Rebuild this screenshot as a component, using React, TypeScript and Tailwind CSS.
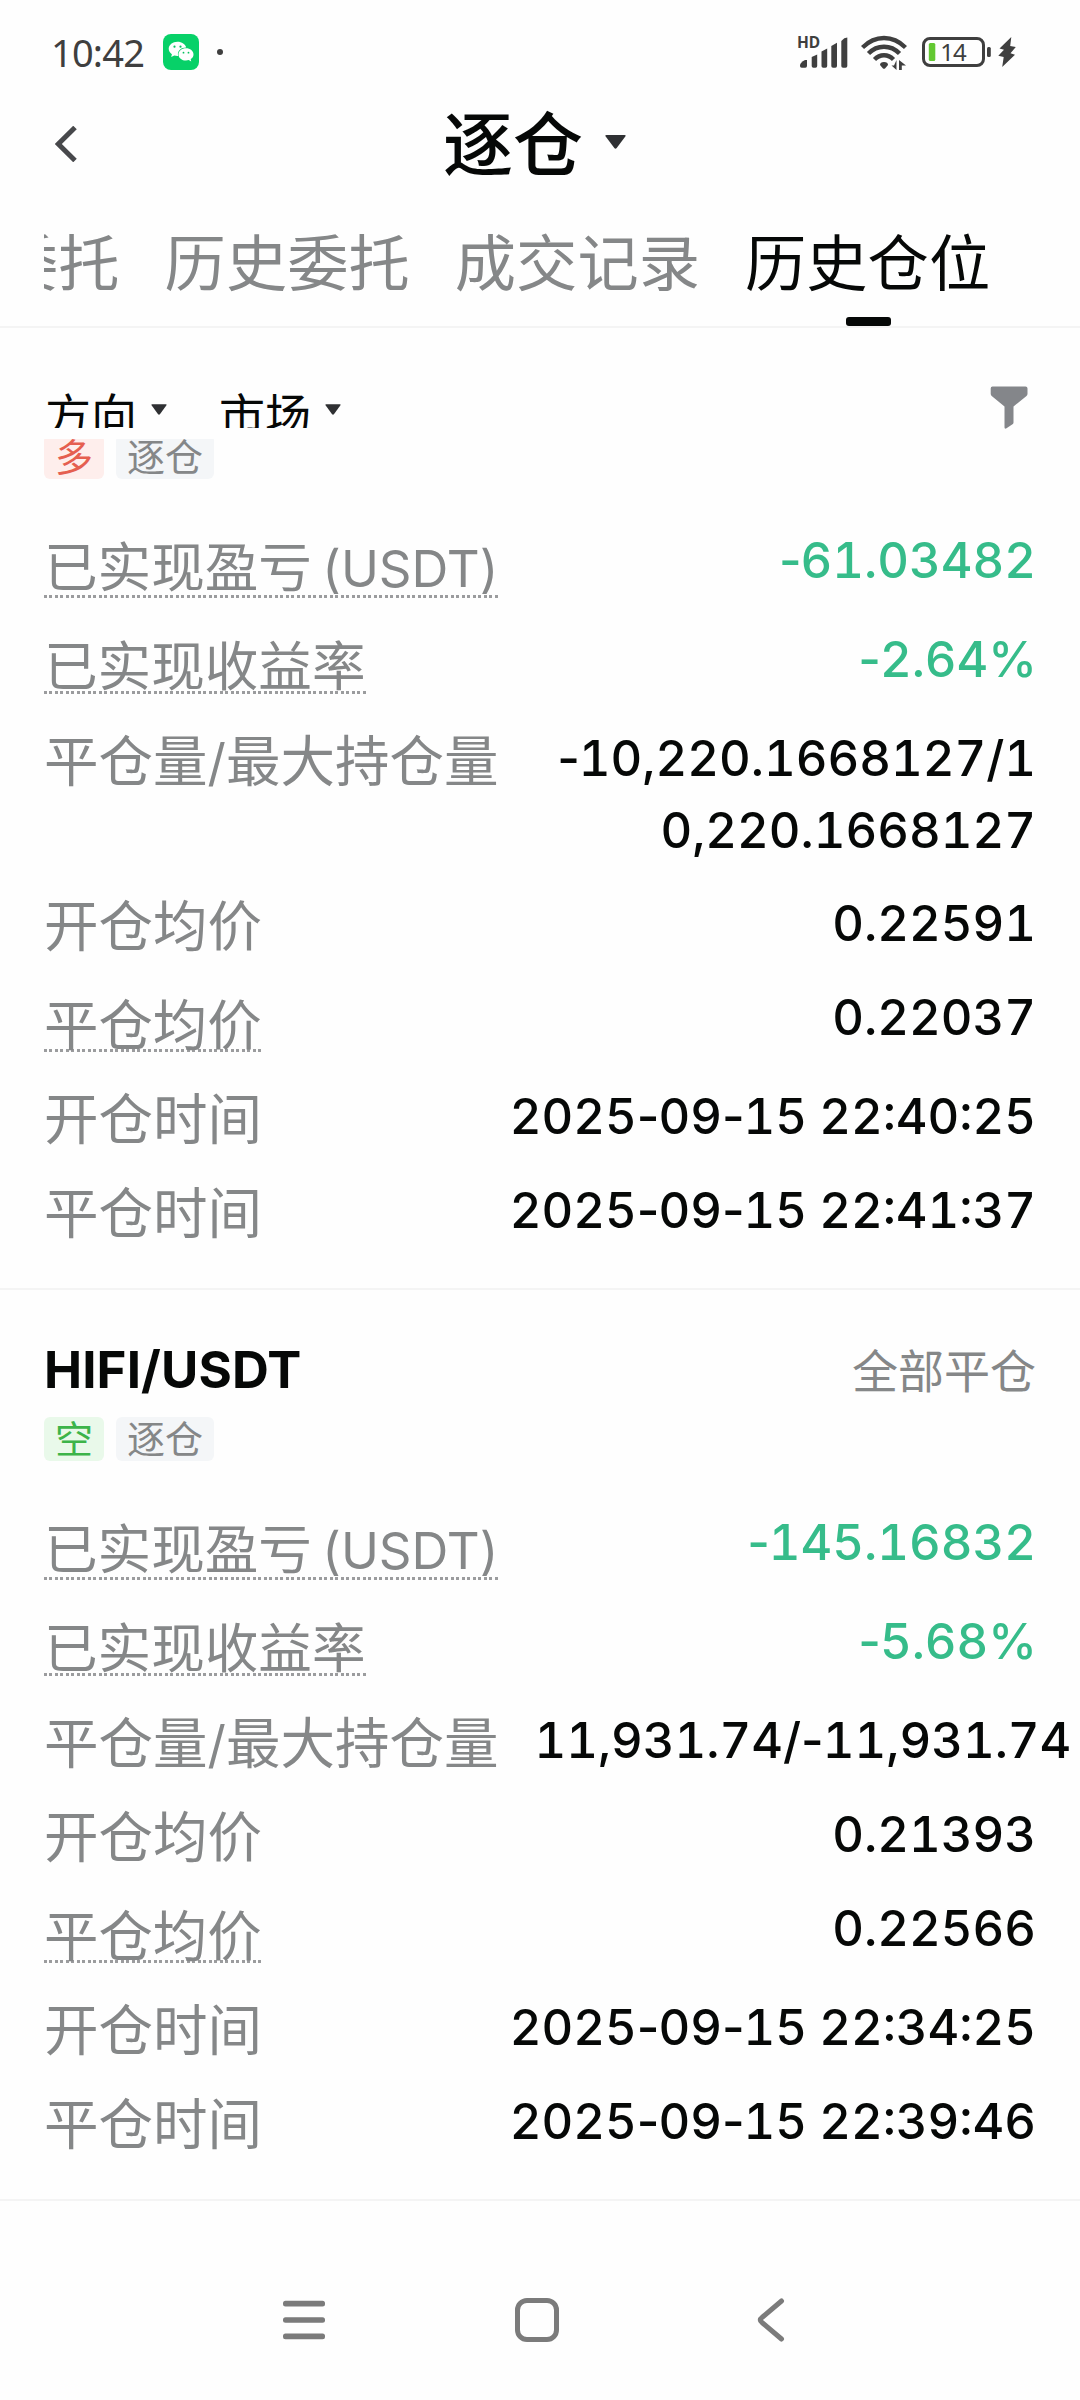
type Row = {
  label: string;
  value: string;
  underline?: boolean;
  tone?: "green";
  wrap?: boolean;
};

type Position = {
  pair?: string;
  status?: string;
  side: "long" | "short";
  rows: Row[];
};

const positions: Position[] = [
  {
    side: "long",
    rows: [
      { label: "已实现盈亏 (USDT)", value: "-61.03482", underline: true, tone: "green" },
      { label: "已实现收益率", value: "-2.64%", underline: true, tone: "green" },
      { label: "平仓量/最大持仓量", value: "-10,220.1668127/10,220.1668127", wrap: true },
      { label: "开仓均价", value: "0.22591" },
      { label: "平仓均价", value: "0.22037", underline: true },
      { label: "开仓时间", value: "2025-09-15 22:40:25" },
      { label: "平仓时间", value: "2025-09-15 22:41:37" },
    ],
  },
  {
    pair: "HIFI/USDT",
    status: "全部平仓",
    side: "short",
    rows: [
      { label: "已实现盈亏 (USDT)", value: "-145.16832", underline: true, tone: "green" },
      { label: "已实现收益率", value: "-5.68%", underline: true, tone: "green" },
      { label: "平仓量/最大持仓量", value: "11,931.74/-11,931.74" },
      { label: "开仓均价", value: "0.21393" },
      { label: "平仓均价", value: "0.22566", underline: true },
      { label: "开仓时间", value: "2025-09-15 22:34:25" },
      { label: "平仓时间", value: "2025-09-15 22:39:46" },
    ],
  },
];

function StatusBar() {
  return (
    <div className="flex h-[104px] items-center pl-[51px] text-[#3f3f3f]">
      <span className="w-24 font-['Noto_Sans',sans-serif] text-[38px] leading-none tracking-[-0.8px]">10:42</span>
      <svg className="ml-4 h-9 w-9" viewBox="0 0 36 36">
        <rect width="36" height="36" rx="8" fill="#07d168" />
        <path
          fill="#fff"
          d="M14.5 7.7c-4.9 0-8.8 3.2-8.8 7.1 0 2.2 1.2 4.1 3.2 5.4l-.7 2.8 3.1-1.6c1 .3 2.1.5 3.2.5h.7c-.2-.6-.3-1.2-.3-1.8 0-3.7 3.5-6.6 7.9-6.6h.4c-.8-3.3-4.4-5.8-8.7-5.8z"
        />
        <path
          fill="#fff"
          d="M23 14.3c-4.2 0-7.5 2.7-7.5 6.1s3.3 6.1 7.5 6.1c1 0 1.9-.1 2.7-.4l2.5 1.5-.5-2.5c1.7-1.1 2.8-2.8 2.8-4.7 0-3.4-3.3-6.1-7.5-6.1z"
        />
        <circle cx="11.5" cy="12.7" r="1.1" fill="#07c160" />
        <circle cx="17.5" cy="12.7" r="1.1" fill="#07c160" />
        <circle cx="20.5" cy="18.7" r="0.9" fill="#07c160" />
        <circle cx="25.5" cy="18.7" r="0.9" fill="#07c160" />
      </svg>
      <span className="ml-[18px] h-1.5 w-1.5 rounded-full bg-[#3f3f3f]" />

      <svg className="ml-[574px] h-9 w-[51px]" viewBox="797 34 51 36" fill="currentColor">
        <text x="797" y="48" fontSize="15.5" fontWeight="700" fontFamily="Noto Sans, sans-serif">
          HD
        </text>
        <path d="M800 65.5q0-3 5-5.5h2v6q0 1.7-1.7 1.7h-3.6q-1.7 0-1.7-1.7z" />
        <path d="M811.7 57l5.5-2.5V66q0 1.7-1.7 1.7h-2.1q-1.7 0-1.7-1.7z" />
        <path d="M821.5 51.5l5.7-3V66q0 1.7-1.7 1.7h-2.3q-1.7 0-1.7-1.7z" />
        <path d="M831.3 46l5.7-3.2V66q0 1.7-1.7 1.7H833q-1.7 0-1.7-1.7z" />
        <path d="M841.3 41q3-3.4 6-3.4V66q0 1.7-1.7 1.7H843q-1.7 0-1.7-1.7z" />
      </svg>

      <svg className="ml-[13px] h-9 w-[46px]" viewBox="861 34 46 36" fill="none">
        <g stroke="currentColor" strokeWidth="4.4">
          <path d="M862.5 47.5Q872 38 884 38t21.5 9.5" />
          <path d="M868.5 53.5Q875 46.7 884 46.7t15.5 6.8" />
          <path d="M874.5 59.5Q878.5 55.3 884 55.3t9.5 4.2" />
        </g>
        <path d="M880 65q0-3 4-3t4 3l-3 3.5q-1 .7-2 0z" fill="currentColor" />
        <path d="M896.5 60v10l-5-4.5h2.5zM899 70V60l7 5.5h-4.2V70z" fill="currentColor" />
      </svg>

      <svg className="ml-[15px] h-9 w-[69px]" viewBox="922 34 69 36">
        <rect x="923.5" y="38.5" width="60" height="27" rx="6.5" fill="none" stroke="currentColor" strokeWidth="3" />
        <rect x="987" y="47" width="3.8" height="10" rx="1.5" fill="currentColor" />
        <rect x="928.8" y="43" width="6.5" height="18" rx="1.5" fill="#63c832" />
        <text x="940.2" y="61" fontSize="24" fill="currentColor" letterSpacing="-0.8" fontFamily="Noto Sans, sans-serif">
          14
        </text>
      </svg>

      <svg className="ml-[7px] h-9 w-[18px]" viewBox="998 34 18 36" fill="currentColor">
        <path d="M1011.3 37L999.5 48.5l4.5 1.3-5.7 6 5.4 1.2-1.5 10L1015 54.8l-4.5-1.5 5.3-6.3-5.6-1z" />
      </svg>
    </div>
  );
}

function Caret({ className }: { className: string }) {
  return (
    <svg className={className} viewBox="0 0 21 14" fill="#2f3033">
      <path d="M1.5 0h18q1.8 0 .8 1.5l-8.6 11.6q-1.2 1.3-2.4 0L.7 1.5Q-.3 0 1.5 0z" />
    </svg>
  );
}

function Header() {
  return (
    <header className="flex h-20 items-center pl-[55px]">
      <svg className="h-9 w-[22px]" viewBox="0 0 22 36" fill="none" stroke="#47484b" strokeWidth="5">
        <path d="M20 1.5L3.3 18 20 34.5" />
      </svg>
      <h1 className="ml-[366px] pt-1 text-[70px] font-medium leading-[80px] text-[#060807]">逐仓</h1>
      <Caret className="mb-1 ml-[22px] h-[14px] w-[21px]" />
    </header>
  );
}

function Tabs() {
  return (
    <nav className="h-[144px] border-b-2 border-[#f4f4f4] pl-11 pt-10">
      <div className="flex gap-[45px] overflow-hidden whitespace-nowrap text-[61.3px] leading-[80px] text-[#858788]">
        <span className="-ml-[47px]">委托</span>
        <span>历史委托</span>
        <span>成交记录</span>
        <span className="text-[#060807]">历史仓位</span>
      </div>
      <div className="ml-[802px] mt-[13px] h-[9px] w-[45px] rounded-[3px] bg-[#060807]" />
    </nav>
  );
}

function FilterSelect({ label }: { label: string }) {
  return (
    <div className="flex items-center">
      <span className="text-[46px] leading-[60px] text-[#060807]">{label}</span>
      <Caret className="mb-3 ml-[14px] h-[11px] w-4" />
    </div>
  );
}

function FilterBar() {
  return (
    <div className="flex h-[111px] justify-between pl-[45px] pr-[52px]">
      {/* the bar is lower than its labels, so their feet are cut off */}
      <div className="flex h-[100px] items-start gap-[52px] overflow-hidden pt-[57px]">
        <FilterSelect label="方向" />
        <FilterSelect label="市场" />
      </div>
      <svg className="mt-[58px] h-[43px] w-[38px]" viewBox="0 0 38 43" fill="#84868a">
        <path d="M2.5.5h33q2 0 2 2v5.3q0 1.2-1 2.1L23.5 20.5v15.9q0 1.2-1 1.9l-6 4q-2 1.2-2-1V20.5L1.7 9.9Q.7 9 .7 7.8V2.5q0-2 1.8-2z" />
      </svg>
    </div>
  );
}

function Tags({ side }: { side: Position["side"] }) {
  return (
    <div className="flex gap-3 text-[38px] leading-[44px]">
      {side === "long" ? (
        <span className="rounded-md bg-[#feeeec] px-[11px] text-[#e55f50]">多</span>
      ) : (
        <span className="rounded-md bg-[#e9f9ea] px-[11px] text-[#3cb449]">空</span>
      )}
      <span className="rounded-md bg-[#f4f6f8] px-[11px] text-[#858788]">逐仓</span>
    </div>
  );
}

// Latin runs inside a label are set a little smaller than the Chinese glyphs.
function LabelText({ text }: { text: string }) {
  return text.split(/([\x20-\x7e]+)/).map((part, i) =>
    i % 2 ? (
      <span key={i} className="text-[51px] leading-none [word-spacing:-4px]">
        {part}
      </span>
    ) : (
      part
    ),
  );
}

// Digits are tabular; hyphens, spaces and percent signs keep their natural width.
function ValueText({ text }: { text: string }) {
  return text.split(/([- %])/).map((part, i) =>
    i % 2 ? (
      <span key={i} className="normal-nums tracking-[-1px]">
        {part}
      </span>
    ) : (
      part
    ),
  );
}

function DataRow({ label, value, underline, tone, wrap }: Row) {
  return (
    <div className={underline ? "flex h-[78px] items-start" : "flex min-h-[73px] items-start"}>
      {underline ? (
        <div className="mt-[18px] shrink-0">
          <div
            className={`h-[50px] whitespace-nowrap leading-[50px] text-[#858788] ${
              label.length === 4 ? "text-[54.4px]" : "text-[53.6px]"
            }`}
          >
            <LabelText text={label} />
          </div>
          <div
            className={`h-[2.5px] bg-[repeating-linear-gradient(90deg,#9b9c9e_0_2.75px,transparent_2.75px_5.5px)] ${
              label.includes("(") ? "mt-[2px]" : "-mt-px"
            }`}
          />
        </div>
      ) : (
        <div className="-mb-1 mt-1 shrink-0 whitespace-nowrap text-[54.5px] leading-[68px] text-[#858788]">
          <LabelText text={label} />
        </div>
      )}
      <div
        className={`ml-9 min-w-0 flex-1 text-right text-[49px] font-medium leading-[72px] tabular-nums ${
          wrap ? "break-all" : "whitespace-nowrap"
        } ${tone === "green" ? "text-[#36bc8a]" : "text-[#060807]"}`}
      >
        <ValueText text={value} />
      </div>
    </div>
  );
}

function PositionCard({ pair, status, side, rows }: Position) {
  return (
    <section className="border-b-2 border-[#f4f4f4] px-11 pb-10">
      {pair ? (
        <div className="pt-[49px]">
          <div className="mb-4 flex items-center justify-between leading-[60px]">
            <h2 className="text-[51px] font-bold tracking-[0.1px] text-[#060807]">{pair}</h2>
            <span className="pt-0.5 text-[46px] text-[#858788]">{status}</span>
          </div>
          <Tags side={side} />
        </div>
      ) : (
        <div className="flex h-10 items-end overflow-hidden">
          <Tags side={side} />
        </div>
      )}
      <div className="mt-[46px] flex flex-col gap-[21px]">
        {rows.map((row) => (
          <DataRow key={row.label} {...row} />
        ))}
      </div>
    </section>
  );
}

function SystemNav() {
  return (
    <div className="flex h-[198px] items-center pl-[283px] pt-10">
      <svg className="h-10 w-[42px]" viewBox="0 0 42 40" fill="#7b7b7b">
        <rect y="0.8" width="42" height="5.6" rx="2.5" />
        <rect y="17.2" width="42" height="5.6" rx="2.5" />
        <rect y="33.6" width="42" height="5.6" rx="2.5" />
      </svg>
      <div className="ml-[190px] h-11 w-11 rounded-[12px] border-[5px] border-[#7b7b7b]" />
      <svg
        className="ml-[198px] h-11 w-7"
        viewBox="0 0 28 44"
        fill="none"
        stroke="#7b7b7b"
        strokeWidth="5"
        strokeLinecap="round"
      >
        <path d="M24.5 3L5 19.5q-3.5 2.5 0 5L24.5 41" />
      </svg>
    </div>
  );
}

export default function App() {
  return (
    <div className="h-[2400px] w-[1080px] overflow-hidden bg-[#fefefe] font-['Inter','Noto_Sans_CJK_SC',sans-serif]">
      <StatusBar />
      <Header />
      <Tabs />
      <FilterBar />
      {positions.map((position) => (
        <PositionCard key={position.side} {...position} />
      ))}
      <SystemNav />
    </div>
  );
}
